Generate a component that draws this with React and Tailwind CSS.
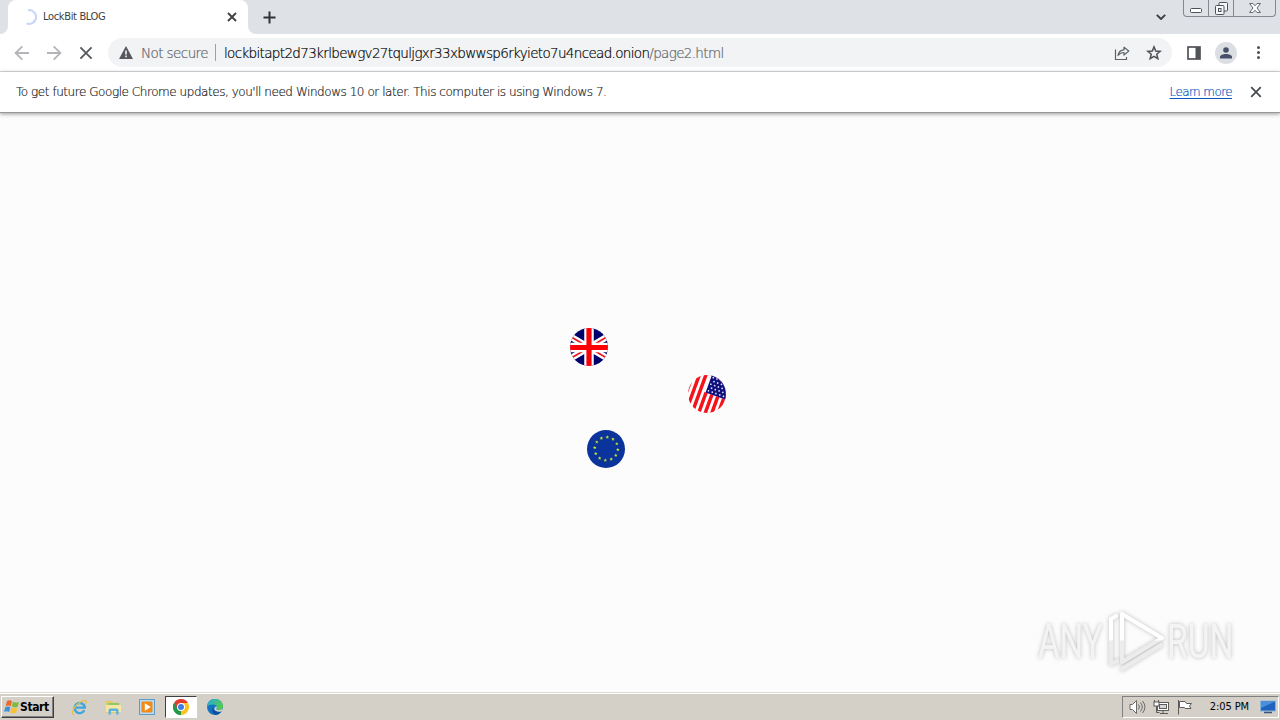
import { clsx } from 'clsx'

const UI = "font-['DejaVu_Sans_Condensed','DejaVu_Sans',sans-serif] whitespace-nowrap"
const LIGHT = "font-['DejaVu_Sans_Light','DejaVu_Sans',sans-serif] font-extralight whitespace-nowrap [-webkit-text-stroke:0.2px_currentColor]"

const Cross = ({ size = 10, w = 1.8, color = '#3c4043' }) => (
  <svg width={size} height={size} viewBox="0 0 10 10" className="block shrink-0" stroke={color} strokeWidth={w}>
    <path d="M1 1l8 8M9 1l-8 8" />
  </svg>
)

const Arrow = ({ flip = false }) => (
  <svg width="16" height="16" viewBox="0 0 16 16" className={clsx('block shrink-0', flip && 'rotate-180')} fill="none" stroke="#b3b5b8" strokeWidth="1.8">
    <path d="M15 8H2M8.3 1.3L1.6 8l6.7 6.7" />
  </svg>
)

function TabStrip() {
  return (
    <div className="relative flex h-[34px] bg-[#dee1e6]">
      <div className="w-2 bg-white"><div className="h-full rounded-br-lg bg-[#dee1e6]" /></div>
      <div className="flex w-[240px] items-center rounded-t-lg bg-white pl-[13px] pr-[11px]">
        <svg width="16" height="16" viewBox="0 0 16 16" fill="none" stroke="#c6d5f8" strokeWidth="2">
          <path d="M7 1.2A6.9 6.9 0 1 1 5.5 14.4" />
        </svg>
        <span className={clsx(UI, 'ml-1.5 pt-px text-[11px] tracking-[-0.34px] text-[#3c4043]')}>LockBit BLOG</span>
        <div className="ml-auto"><Cross size={10} /></div>
      </div>
      <div className="w-2 bg-white"><div className="h-full rounded-bl-lg bg-[#dee1e6]" /></div>
      <svg width="13" height="13" viewBox="0 0 13 13" className="ml-[7px] mt-[11px]" stroke="#303338" strokeWidth="2">
        <path d="M6.5 .5v12M.5 6.5h12" />
      </svg>
      <svg width="10" height="6" viewBox="0 0 10 6" className="ml-auto mr-[17px] mt-[14px]" fill="none" stroke="#3c4043" strokeWidth="1.9">
        <path d="M.8 .8L5 5 9.200 .8" />
      </svg>
      <div className="mr-1 flex h-[17px] w-[93px] rounded-b-[4px] border border-t-0 border-[#85888e] text-[#4d5158]">
        <div className="flex w-[25px] items-end justify-center border-r border-[#85888e] pb-[3px]">
          <svg width="12" height="5" viewBox="0 0 12 5" fill="#fff" stroke="currentColor"><rect x=".5" y=".5" width="11" height="4" rx="1" /></svg>
        </div>
        <div className="flex w-[25px] items-end justify-center border-r border-[#85888e] pb-px">
          <svg width="13" height="13" viewBox="0 0 13 13" fill="#f7f8fa" stroke="currentColor">
            <rect x="4" y=".5" width="8.500" height="8.500" rx="1" />
            <rect x=".5" y="3.500" width="8.500" height="9" rx="1" />
            <rect x="3.500" y="6.500" width="2.500" height="3" />
          </svg>
        </div>
        <div className="flex flex-1 items-end justify-center pb-[3px]">
          <svg width="12" height="10" viewBox="0 0 12 11" preserveAspectRatio="none" fill="#fff" stroke="currentColor" strokeWidth=".9">
            <path d="M.6 .6H4L6 3 8 .6h3.400L8 5.500l3.400 4.900H8L6 8l-2 2.400H.6L4 5.500z" />
          </svg>
        </div>
      </div>
    </div>
  )
}

function Toolbar() {
  return (
    <div className="flex h-[38px] items-center border-b border-[#dadce0] bg-white pl-3.5 pr-[20px]">
      <Arrow />
      <div className="ml-4"><Arrow flip /></div>
      <div className="ml-[17px]"><Cross size={14} w={1.300} color="#55585c" /></div>
      <div className="ml-[15px] flex h-[29px] w-[1064px] items-center rounded-full bg-[#f1f3f4] pl-[11px] pr-[10px]">
        <svg width="14" height="13" viewBox="0 0 14 13" className="shrink-0">
          <path d="M7 0l7 13H0z" fill="#55595e" />
          <path d="M7 4.500v4M7 9.500v1.700" stroke="#fff" strokeWidth="1.500" />
        </svg>
        <span className={clsx(LIGHT, 'ml-2 w-[74px] pt-px text-[13.5px] tracking-[-0.58px] text-[#5f6368]')}>Not secure</span>
        <div className="h-[17px] w-px bg-[#9da1a6]" />
        <span className={clsx(LIGHT, 'ml-2 pt-px text-[13.5px] tracking-[-0.66px] text-[#5f6368]')}>
          <span className="text-black">lockbitapt2d73krlbewgv27tquljgxr33xbwwsp6rkyieto7u4ncead.onion</span>/page2.html
        </span>
        <svg width="16" height="16" viewBox="0 0 16 16" className="ml-auto shrink-0" fill="none" stroke="#5f6368" strokeWidth="1.200">
          <path d="M1.500 4.500v10h11V12" />
          <path d="M4 10.500C4.500 6.500 7 5 10 4.800V2.200L14.800 6 10 10V7.500C7.500 7.500 5.500 8.500 4 10.500z" strokeLinejoin="round" />
        </svg>
        <svg width="16" height="16" viewBox="0 0 16 16" className="ml-4 shrink-0" fill="none" stroke="#4e5257" strokeWidth="1.500">
          <path d="M8 1.900l1.700 4.200 4.500.3-3.450 2.900 1.100 4.400L8 11.300l-3.850 2.400 1.100-4.400L1.800 6.400l4.500-.3z" />
        </svg>
      </div>
      <svg width="14" height="14" viewBox="0 0 14 14" className="ml-[15px]">
        <rect x="1" y="1" width="12" height="12" fill="none" stroke="#505358" strokeWidth="1.700" />
        <rect x="8.500" y="1" width="4.500" height="12" fill="#505358" />
      </svg>
      <div className="ml-[14px] flex size-[22px] items-center justify-center rounded-full bg-[#dbdfe4]">
        <svg width="12" height="12" viewBox="0 0 12 12" fill="#47516a">
          <circle cx="6" cy="3" r="2.800" />
          <path d="M0 11.500V10c0-2 3-3 6-3s6 1 6 3v1.500z" />
        </svg>
      </div>
      <svg width="3" height="13" viewBox="0 0 3 13" className="ml-auto" fill="#4e5156">
        <circle cx="1.500" cy="1.600" r="1.500" /><circle cx="1.500" cy="6.500" r="1.500" /><circle cx="1.500" cy="11.400" r="1.500" />
      </svg>
    </div>
  )
}

function InfoBar() {
  return (
    <div className={clsx(LIGHT, 'relative flex h-[41px] shrink-0 items-center border-b border-[#989898] bg-white pl-4 pr-[18px] text-[12px] text-[#202124] shadow-[0_1px_4px_rgba(0,0,0,0.4)]')}>
      <span className="tracking-[-0.45px]">To get future Google Chrome updates, you'll need Windows 10 or later. This computer is using Windows 7.</span>
      <span className="ml-auto tracking-[-0.6px] text-[#0b57c0] underline decoration-1 underline-offset-2">Learn more</span>
      <div className="ml-[18px]"><Cross size={12} w={1.500} color="#4a4d50" /></div>
    </div>
  )
}

const UkFlag = () => (
  <svg width="38" height="38" viewBox="0 0 38 38" className="absolute left-[570px] top-[215px]">
    <clipPath id="uk"><circle cx="19" cy="19" r="19" /></clipPath>
    <g clipPath="url(#uk)">
      <rect width="38" height="38" fill="#00006b" />
      <path d="M-9 3L47 36M47 3L-9 36" stroke="#fff" strokeWidth="6.500" />
      <path d="M-9 3L47 36M47 3L-9 36" stroke="#f0141e" strokeWidth="1.800" />
      <path d="M19 0v38M0 19.500h38" stroke="#fff" strokeWidth="9.500" />
      <path d="M19 0v38M0 19.500h38" stroke="#fb0007" strokeWidth="5.200" />
    </g>
  </svg>
)

const UsFlag = () => (
  <svg width="38" height="38" viewBox="0 0 38 38" className="absolute left-[688px] top-[262px]">
    <clipPath id="us"><circle cx="19" cy="19" r="19" /></clipPath>
    <g clipPath="url(#us)">
      <rect width="38" height="38" fill="#fff" />
      <g transform="rotate(20 19 19)">
        {[-2.700, 3.500, 9.700, 15.900, 22.100, 28.300, 34.500].map((x) => <rect key={x} x={x} y="-4" width="3.500" height="46" fill="#f5121b" />)}
        <rect x="15.500" y="-4" width="26" height="22" fill="#fff" />
        <rect x="17.100" y="-4" width="25" height="22" fill="#10107c" />
        {[0, 1, 2, 3, 4].map((r) => [0, 1, 2, 3, 4].map((c) => (
          <circle key={`${r}${c}`} cx={19.300 + c * 4 + (r % 2) * 2} cy={1.500 + r * 3.500} r=".9" fill="#d8dcff" />
        )))}
      </g>
    </g>
  </svg>
)

const EuFlag = () => (
  <svg width="38" height="38" viewBox="0 0 38 38" className="absolute left-[587px] top-[317px]">
    <circle cx="19" cy="19" r="19" fill="#0a339b" />
    {Array.from({ length: 12 }, (_, i) => (
      <path key={i} d="M0-1.900L.5-.6 1.800-.6.8.3 1.100 1.500 0 .8-1.100 1.500-.8.3-1.800-.6-.5-.6z" fill="#c8e529"
        transform={`translate(${19.300 + 11.600 * Math.cos((i * 30 + 5) * Math.PI / 180)} ${18.700 + 11.600 * Math.sin((i * 30 + 5) * Math.PI / 180)})`} />
    ))}
  </svg>
)

const Watermark = () => (
  <svg width="230" height="80" viewBox="0 0 230 80" className="absolute left-[1030px] top-[491px] drop-shadow-[0_0_2px_rgba(0,0,0,0.25)]">
    <defs>
      <linearGradient id="wm" x1="0" y1="0" x2="0" y2="72" gradientUnits="userSpaceOnUse">
        <stop offset=".49" stopColor="#fff" />
        <stop offset=".52" stopColor="#ececec" />
      </linearGradient>
    </defs>
    <g fill="url(#wm)" fontFamily="'Roboto','Liberation Sans',sans-serif" fontSize="49">
      <text transform="translate(8 54) scale(.676 1)" y="0" fill="#f4f4f4">ANY</text>
      <text transform="translate(137 54) scale(.686 1)" y="0" fill="#f4f4f4">RUN</text>
    </g>
    <g fill="none" stroke="url(#wm)" strokeWidth="4" strokeLinejoin="round" strokeLinecap="round">
      <path d="M92 10v48l40-24z" />
      <path d="M86 12l-5 3v45l6-3M92 65l39-24" />
    </g>
  </svg>
)

function PageBody() {
  return (
    <main className="relative flex-1 bg-[#fcfcfc]">
      <UkFlag />
      <UsFlag />
      <EuFlag />
      <Watermark />
    </main>
  )
}

const WinLogo = () => (
  <svg width="16" height="16" viewBox="0 0 16 16" className="shrink-0">
    <path d="M3 2q3-1.500 5 .3L6.800 7.200Q4.500 5.700 1.600 7z" fill="#ed6a2c" />
    <path d="M9 2.800q2.500 1.500 6 .2L13.500 8Q10.500 9 7.800 7.600z" fill="#7cb93c" />
    <path d="M1.400 8q3-1.300 5 .3L5.200 13Q3 11.500 0 12.800z" fill="#3f8fdb" />
    <path d="M7.500 8.600q2.500 1.500 5.800.3L12 13.800q-3.200 1-5.800-.4z" fill="#fbc02d" />
  </svg>
)

const IeIcon = () => (
  <svg width="17" height="17" viewBox="0 0 17 17" fill="none">
    <path d="M13.300 11.300A5.100 5.100 0 1 1 13.800 8.600H4.500" stroke="#3fa7df" strokeWidth="2.400" />
    <path d="M3 15.800C-1.500 14.500 4.500 5 12 1.900c3.500-1.200 4 .8 2.500 3" stroke="#eabf3c" strokeWidth="1.200" />
  </svg>
)

const FolderIcon = () => (
  <svg width="17" height="17" viewBox="0 0 17 17">
    <path d="M1 2h6l1 1.500h7V14H1z" fill="#e8c767" />
    <path d="M3 4h11v3H3z" fill="#8fc76b" />
    <path d="M1 6h15v7H1z" fill="#f8e7a0" />
    <path d="M3.500 15.500V11q0-1.500 1.500-1.500h7q1.500 0 1.500 1.500v4.500h-2.500V12H6v3.500z" fill="#5fb2df" />
  </svg>
)

const MediaIcon = () => (
  <svg width="16" height="16" viewBox="0 0 16 16">
    <rect x=".5" y=".5" width="15" height="15" fill="#b9daf2" stroke="#5e9ccc" />
    <rect x="2.500" y="2.500" width="11" height="11" rx="1" fill="#f08a18" />
    <path d="M5.800 4.200v7.600L11.800 8z" fill="#fff" />
  </svg>
)

const ChromeIcon = () => (
  <svg width="16" height="16" viewBox="0 0 16 16">
    <path d="M8 8L1.070 4A8 8 0 0 1 14.930 4z" fill="#e33b2e" />
    <path d="M8 8l6.930-4A8 8 0 0 1 8 16z" fill="#fcc31e" />
    <path d="M8 8v8A8 8 0 0 1 1.070 4z" fill="#279847" />
    <path d="M8 4h6.930L11.500 10 8 16l0-4z" fill="#fcc31e" />
    <path d="M1.070 4L4.500 10 8 8V4z" fill="#e33b2e" />
    <path d="M1.070 4l3.460 6L8 12v4A8 8 0 0 1 1.070 4z" fill="#279847" />
    <circle cx="8" cy="8" r="4" fill="#fff" />
    <circle cx="8" cy="8" r="3" fill="#3e7de8" />
  </svg>
)

const EdgeIcon = () => (
  <svg width="16" height="16" viewBox="0 0 16 16">
    <defs>
      <linearGradient id="edge" x1="0" y1="0" x2="1" y2=".5">
        <stop offset="0" stopColor="#23a9e1" /><stop offset="1" stopColor="#55c94c" />
      </linearGradient>
    </defs>
    <circle cx="8" cy="8" r="8" fill="#1273c4" />
    <path d="M0 8a8 8 0 0 1 16-.5c0 2.500-2 3.500-4 3.500-2.500 0-3-1-2.200-2C10.500 7.500 9 5.500 6 5.500S.5 6.500 0 8z" fill="url(#edge)" />
    <path d="M6.200 8.500c0 3 3 5 8 4A8 8 0 0 1 9 16C5 14.500 4.200 10.500 6.200 8.500z" fill="#0d4e9e" />
    <path d="M9.700 9c-.8 1-.3 2 2.200 2 1.200 0 2.600-.4 3.400-1.300L16 11l-1.800 1.500c-3.500.7-6-.3-6.800-2C7 9 8 7.500 9.500 7.500q.8.800.2 1.500z" fill="#d4d0c8" />
  </svg>
)

const TASKS = [
  { id: 'ie', icon: IeIcon },
  { id: 'explorer', icon: FolderIcon },
  { id: 'media', icon: MediaIcon },
  { id: 'chrome', icon: ChromeIcon, active: true },
  { id: 'edge', icon: EdgeIcon },
]

function Taskbar() {
  return (
    <footer className="flex h-[28px] shrink-0 items-center border-t border-[#dedbd5] bg-[#d4d0c8] pl-px pr-px pt-px shadow-[inset_0_1px_0_#fff]">
      <button className={clsx(UI, 'flex h-[22px] w-[53px] items-center border border-[#404040] border-l-white border-t-white pl-0.5 text-[12px] font-bold tracking-[-0.4px] text-black shadow-[inset_-1px_-1px_0_#808080]')}>
        <WinLogo />Start
      </button>
      <div className="ml-[9px] flex items-center gap-0.5">
        {TASKS.map(({ id, icon: Icon, active }) => (
          <div key={id} className={clsx('flex h-[22px] w-8 items-center justify-center', active && 'border border-white border-l-[#404040] border-t-[#404040] bg-white')}>
            <Icon />
          </div>
        ))}
      </div>
      <div className="ml-auto flex h-[22px] w-[157px] items-center border border-white border-l-[#808080] border-t-[#808080] pl-[6px] pr-0.5">
        <svg width="17" height="16" viewBox="0 0 17 16" fill="none" stroke="#6c6b68">
          <path d="M1 5.500h2.500L7.500 1.500v13l-4-4H1z" fill="#fff" />
          <path d="M9.500 5.500q1.800 2.500 0 5M11.500 3.500q3.500 4.500 0 9M13.500 2q5 6 0 12" />
        </svg>
        <svg width="16" height="16" viewBox="0 0 16 16" className="ml-[7px]" fill="#fff" stroke="#5c5b59">
          <rect x="4.500" y="3.500" width="11" height="8" /><rect x="6.500" y="5.500" width="7" height="4" fill="#d5d5d3" />
          <path d="M1.500 1v4h4V1M3.500 5v8.500h3M7 14.500h8M10 12v2" fill="none" />
          <rect x="1" y="3" width="5" height="4" />
        </svg>
        <svg width="16" height="16" viewBox="0 0 16 16" className="ml-2" fill="#fff" stroke="#5c5b59">
          <path d="M1.500 1v14.500" />
          <path d="M2.500 2.500H8l1.500 2h5l-2 2.500 1.500 2.500H8.500L7 8.500H2.500z" />
        </svg>
        <span className={clsx(UI, 'ml-auto text-[11px] tracking-[-0.1px] text-black')}>2:05 PM</span>
        <svg width="16" height="14" viewBox="0 0 16 14" className="ml-[11px]">
          <rect x=".5" y="1" width="15" height="10" fill="#1f63bd" stroke="#8ab5dd" />
          <path d="M1 1.500h14L1 8z" fill="#4a8fdc" />
          <path d="M4 12.500h8" stroke="#35567e" strokeWidth="1.500" />
        </svg>
      </div>
    </footer>
  )
}

export default function App() {
  return (
    <div className="flex h-[720px] w-[1280px] flex-col overflow-hidden bg-[#fcfcfc]">
      <TabStrip />
      <Toolbar />
      <div className="relative z-10"><InfoBar /></div>
      <PageBody />
      <Taskbar />
    </div>
  )
}
